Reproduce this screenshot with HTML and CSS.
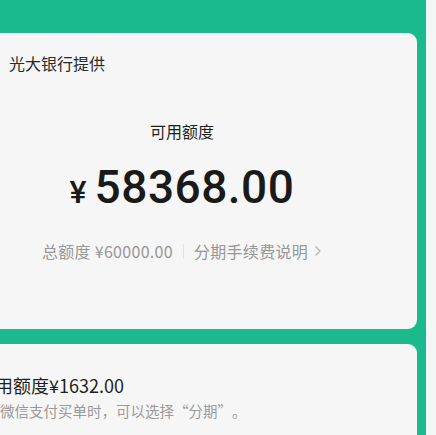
FILE: index.html
```html
<!DOCTYPE html>
<html lang="zh-CN">
<head>
<meta charset="utf-8">
<title>分期额度</title>
<link rel="stylesheet" href="styles.css">
</head>
<body>
<div class="page">
  <div class="main">
    <section class="card card-quota">
      <div class="provider">光大银行提供</div>
      <div class="quota">
        <div class="quota-label">可用额度</div>
        <div class="quota-amount"><span class="yen">¥</span><span class="num">58368.00</span></div>
        <div class="quota-meta">
          <span class="total">总额度 ¥60000.00</span>
          <span class="sep"></span>
          <span class="link">分期手续费说明</span>
          <svg class="chev" width="8" height="12" viewBox="0 0 8 12"><path d="M1.5 1.5 L6 6 L1.5 10.5" fill="none" stroke="#b5b5b5" stroke-width="1.3"/></svg>
        </div>
      </div>
    </section>
    <section class="card card-inst">
      <div class="inst-title">可用额度¥1632.00</div>
      <div class="inst-desc">使用微信支付买单时，可以选择<span class="q-open">“</span>分期<span class="q-close">”</span>。</div>
    </section>
  </div>
  <div class="edge"></div>
</div>
</body>
</html>
```

FILE: styles.css
```css
html, body {
  margin: 0;
  padding: 0;
  background: #f3f7f5;
  font-family: "Noto Sans CJK SC", "Noto Sans", sans-serif;
}

.page {
  display: grid;
  grid-template-columns: 426px 10px;
  width: 436px;
  height: 435px;
  overflow: hidden;
}

.main {
  background: #1ab98e;
  padding-top: 33px;
  box-sizing: border-box;
  display: flex;
  flex-direction: column;
  gap: 15px;
  overflow: hidden;
  min-width: 0;
}

.edge {
  background: #f2f7f5;
}

.card {
  background: #f6f6f6;
  margin-right: 9px;
  border-radius: 9px;
}

.card-quota {
  height: 296px;
  flex: none;
  margin-left: -53px;
  padding: 19px 0 0 62px;
  box-sizing: border-box;
}

.provider {
  font-size: 16px;
  line-height: 22px;
  color: #2a2a2a;
}

.quota {
  margin-left: -62px;
  margin-top: 46px;
  display: flex;
  flex-direction: column;
  align-items: center;
}

.quota-label {
  font-size: 16px;
  line-height: 22px;
  color: #1f1f1f;
}

.quota-amount {
  margin-top: 18px;
  display: flex;
  align-items: baseline;
  color: #1a1a1a;
  font-family: Roboto, "Noto Sans", sans-serif;
  line-height: 54px;
}

.yen {
  font-size: 32px;
  font-weight: 500;
  margin-right: 8px;
}

.num {
  font-size: 46px;
  font-weight: 500;
  letter-spacing: 0.5px;
}

.quota-meta {
  margin-top: 22px;
  display: flex;
  align-items: center;
  font-size: 16px;
  line-height: 20px;
  color: #979797;
  letter-spacing: 0.3px;
}

.sep {
  width: 1px;
  height: 15px;
  background: #e2e2e2;
  margin: 0 10px 0 10px;
}

.chev {
  margin-left: 6px;
}

.card-inst {
  flex: 1;
  margin-left: -30px;
  padding: 29px 0 0 7px;
  border-radius: 9px 9px 0 0;
}

.inst-title {
  font-size: 18px;
  line-height: 24px;
  color: #1f1f1f;
}

.inst-desc {
  margin-top: 4px;
  margin-left: -6px;
  font-size: 14.5px;
  line-height: 20px;
  color: #9a9a9a;
  white-space: nowrap;
}

.q-open,
.q-close {
  display: inline-block;
  width: 1em;
}

.q-open {
  text-align: right;
}

.q-close {
  text-align: left;
}
```
